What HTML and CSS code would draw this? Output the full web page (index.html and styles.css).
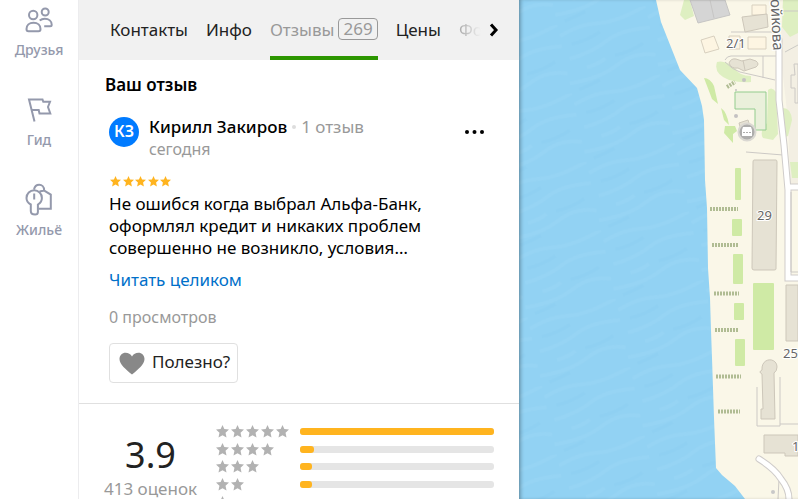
FILE: index.html
```html
<!DOCTYPE html>
<html lang="ru">
<head>
  <meta charset="UTF-8">
  <meta name="viewport" content="width=device-width, initial-scale=1.0">
  <title>Отзывы</title>
  <link rel="stylesheet" href="styles.css">
</head>
<body>
  <svg class="sprite" aria-hidden="true">
    <symbol id="star" viewBox="0 0 12 12">
      <path d="M6 0l1.700 3.800 4.300.4-3.200 2.900.9 4.400L6 9.400l-3.700 2.100.9-4.400L0 4.200l4.300-.4z"/>
    </symbol>
  </svg>

  <nav class="sidebar">
    <a class="side-link" href="#">
      <svg class="side-icon" viewBox="1 -3 32 36">
        <circle cx="11.200" cy="12" r="4.200"/>
        <circle cx="23.200" cy="9" r="3.500"/>
        <path d="M11.500 19.700c4.300 0 7 2.800 7 6.200c0 1.600-.9 2.300-2 2.300H6.500c-1.200 0-2-.8-2-2.300c0-3.400 2.700-6.200 7-6.200z"/>
        <path d="M17.700 17.600c1.300-1.100 3-1.800 5-1.800 4.300 0 7 2.400 7 6 0 1-.6 1.500-1.500 1.500h-6"/>
      </svg>
      <span>Друзья</span>
    </a>
    <a class="side-link" href="#">
      <svg class="side-icon" viewBox="1 -2 32 36">
        <path d="M12.500 29.500L7 7.500h13.500l.8 2.300h6.700l-2 5.200 2.300 6.500H17.500l-.8-3.500H9.800"/>
      </svg>
      <span>Гид</span>
    </a>
    <a class="side-link" href="#">
      <svg class="side-icon" viewBox="1 -2 32 36">
        <path d="M8.800 22.500c-2.700-1.300-4.300-3.600-4.300-6.500a7.700 7.700 0 0 1 15.400 0c0 2.900-1.500 5-4 6.500V30c0 1.600-1.200 2.500-2.800 2.500-2.700 0-4.300-1.500-4.300-3.500z"/>
        <path d="M12.200 11.500v6M12 7.500c.6-2.700 2.700-4.700 5.200-4.700 2.700 0 4.900 2 4.900 5.300M17.500 9.500l4.700-.9 6.600 4v14.200H16.500"/>
      </svg>
      <span>Жильё</span>
    </a>
  </nav>

  <main class="panel">
    <nav class="tabs">
      <a class="tab" href="#">Контакты</a>
      <a class="tab" href="#">Инфо</a>
      <a class="tab active" href="#">Отзывы <span class="tab-count">269</span></a>
      <a class="tab" href="#">Цены</a>
      <a class="tab faded" href="#">Фо</a>
      <button class="tabs-next" type="button" aria-label="Вперёд">
        <svg viewBox="0 0 10 14"><path d="M2 1.500L7 7l-5 5.500"/></svg>
      </button>
    </nav>

    <section class="my-review">
      <h2>Ваш отзыв</h2>
      <article class="review">
        <header class="author">
          <div class="avatar">КЗ</div>
          <div class="author-info">
            <div class="author-line"><b>Кирилл Закиров</b><i class="dot"></i><span>1 отзыв</span></div>
            <div class="date">сегодня</div>
          </div>
          <button class="more" type="button" aria-label="Ещё">
            <svg viewBox="0 0 20 4"><circle cx="2" cy="2" r="2"/><circle cx="9.500" cy="2" r="2"/><circle cx="17" cy="2" r="2"/></svg>
          </button>
        </header>
        <div class="stars small">
          <svg><use href="#star"/></svg><svg><use href="#star"/></svg><svg><use href="#star"/></svg><svg><use href="#star"/></svg><svg><use href="#star"/></svg>
        </div>
        <p class="review-text">Не ошибся когда выбрал Альфа-Банк, оформлял кредит и никаких проблем совершенно не возникло, условия…</p>
        <a class="read-more" href="#">Читать целиком</a>
        <div class="views">0 просмотров</div>
        <button class="useful" type="button">
          <svg viewBox="0 0 26 23"><path d="M13 22.500C7 17.300.5 12.500.5 6.900.5 3.300 3.200.7 6.600.7c2.600 0 5 1.300 6.400 3.700C14.400 2 16.800.7 19.400.7c3.400 0 6.100 2.600 6.100 6.200 0 5.600-6.500 10.400-12.500 15.600z"/></svg>
          <span>Полезно?</span>
        </button>
      </article>
    </section>

    <section class="rating">
      <div class="score">
        <div class="score-value">3.9</div>
        <div class="score-count">413 оценок</div>
      </div>
      <div class="chart">
        <div class="chart-row">
          <div class="stars"><svg><use href="#star"/></svg><svg><use href="#star"/></svg><svg><use href="#star"/></svg><svg><use href="#star"/></svg><svg><use href="#star"/></svg></div>
          <div class="bar"><div class="bar-fill" style="width: 100%"></div></div>
        </div>
        <div class="chart-row">
          <div class="stars"><svg><use href="#star"/></svg><svg><use href="#star"/></svg><svg><use href="#star"/></svg><svg><use href="#star"/></svg></div>
          <div class="bar"><div class="bar-fill" style="width: 7%"></div></div>
        </div>
        <div class="chart-row">
          <div class="stars"><svg><use href="#star"/></svg><svg><use href="#star"/></svg><svg><use href="#star"/></svg></div>
          <div class="bar"><div class="bar-fill" style="width: 6%"></div></div>
        </div>
        <div class="chart-row">
          <div class="stars"><svg><use href="#star"/></svg><svg><use href="#star"/></svg></div>
          <div class="bar"><div class="bar-fill" style="width: 6%"></div></div>
        </div>
        <div class="chart-row">
          <div class="stars"><svg><use href="#star"/></svg></div>
          <div class="bar"><div class="bar-fill" style="width: 46%"></div></div>
        </div>
      </div>
    </section>
  </main>

  <div class="map">
    <svg viewBox="519 0 279 499" preserveAspectRatio="xMinYMin slice">
      <defs>
        <pattern id="waves" width="90" height="70" patternUnits="userSpaceOnUse" patternTransform="rotate(-12)">
          <rect width="90" height="70" fill="#92d2f3"/>
          <path d="M0 12q20-8 40-5t50-7M5 36q25-2 40-10t45-4M0 60q30 2 50-8t40-2M20 48q12-1 20-5" fill="none" stroke="#96d4f4" stroke-width="4"/>
          <path d="M10 22q15 0 30-6M50 42q15 0 30-6M8 68q12-2 22-5" fill="none" stroke="#8fd0f2" stroke-width="3"/>
        </pattern>
      </defs>
      <rect x="519" width="279" height="499" fill="url(#waves)"/>
      <path class="land" d="M656 0l5 22 19 48 17 18 5 18 2 14 1 60 2 28 1 60 2 30 1 32 1 28 2 60 2 50 6 7 13 11 10 13h53V0z"/>
      <path d="M783 0h15v190h-8l-2-70-8-70z" fill="#f3efe3"/>

      <!-- зелень -->
      <g class="green">
        <path class="pale" d="M684 0l-4 15 5 5 9-4-4-16zM717 62q-4 12 12 18 12 3 22 2v-6q-12 0-16-8-10-8-18-6zM783 0h15v33l-8 4-8-10zM768 90q4-4 8 2l2 42-5 6-10-2q-4-6 4-15zM783 108q8 0 9 12l-4 16-5 2z"/>
        <path d="M704 78q6 0 10 8l4 18-6-5zM721 108q6 4 8 17l-5-5zM725 126l10 0 2 5-4 3v9l-9-10z"/>
        <rect x="735" y="168" width="6" height="32" rx="1"/>
        <rect x="732" y="219" width="10" height="17" rx="1"/>
        <rect x="733" y="254" width="10" height="30" rx="1"/>
        <rect x="734" y="303" width="10" height="17" rx="1"/>
        <rect x="735" y="339" width="10" height="27" rx="1"/>
        <rect x="753" y="283" width="21" height="67" rx="1"/>
        <path class="pale" d="M790 162h8v16h-6z"/>
      </g>
      <path class="field" d="M735 92h31v38h-11v-21h-20z"/>

      <!-- ступени у воды -->
      <g class="steps">
        <path d="M710 209h28M712 245h26M714 293.500h25M715 330h24M716 376.500h25M718 411.500h22M727 87l8-5"/>
      </g>

      <!-- тропинки и заборы -->
      <g class="fence">
        <path d="M731 32h46M725 60q2-4 6-4l46 0M725 62q8 8 15 10l35 8M763 56v22M746 152l37 3M757 387v39h23v-49M780 424h18M785 52l13-7M783 11h15M778 499l1-20"/>
      </g>

      <!-- дороги -->
      <path class="road-edge" d="M779 40v60l5 45 4 45v88h10M788 187h10M759 459q16 10 22 20 8 10 8 20"/>
      <path class="road" d="M779 40v60l5 45 4 45v88h10M788 187h10M759 459q16 10 22 20 8 10 8 20"/>
      <path class="fence" d="M791 192v80h7M794 64h4v39h-3V88h-4V75h4z"/>

      <!-- здания -->
      <path class="gray-house" d="M690 0h35l5 15-32 8zM710 0l4 18"/>
      <g class="house">
        <path class="cream" d="M701 40l13-4 5 13-14 4zM748 37h18v12h-18zM752 5h14v10h-14zM729 36h11v13h-11z"/>
        <path d="M742 17l25-3 1 13-23 5z"/>
        <path d="M729 63q2-5 7-4l6 2 8-2 6 2q4 3 0 6l-12 4-6-3q-7 1-9-5zM743 60l2 10"/>
        <path d="M754 160h22q1 0 1 2l-1 107q0 1-2 1h-20q-2 0-2-2l1-106q0-2 1-2z"/>
        <path d="M762 374q-4-2 0-4c-1-13 15-13 15-3q0 4-3 6l1 46h-14v-10h2z"/>
        <path d="M786 285h12v56h-12zM764 435h34v21h-13v-3h-21zM739 123l9-3 2 6-9 4z"/>
      </g>

      <circle cx="747" cy="132" r="8.500" fill="#aeadac" stroke="#dad8d2" stroke-width="2"/>
      <path d="M743 127h8l1 3v6h-10v-6z" fill="#fff"/>
      <path d="M743 132.500h8" stroke="#aeadac" stroke-dasharray="2 1"/>
      <circle cx="744" cy="80" r="2" fill="#c4c2c2"/>
      <circle cx="736" cy="90" r="1" fill="#c4c2c2"/>
      <circle cx="736" cy="116" r="2" fill="#c4c2c2"/>
      <circle cx="773" cy="492" r="2" fill="#c8c8c8"/>

      <g class="map-label">
        <text x="726" y="48">2/1</text>
        <text x="757" y="220">29</text>
        <text x="783" y="358">25</text>
        <text x="792" y="451">1</text>
        <text class="street" transform="translate(770 -10) rotate(87)">Бойкова</text>
      </g>
    </svg>
  </div>
</body>
</html>
```
FILE: styles.css
```css
* {
  box-sizing: border-box;
}

body {
  margin: 0;
  height: 100vh;
  display: flex;
  overflow: hidden;
  font-family: "Noto Sans", "Open Sans", sans-serif;
  font-size: 17px;
  color: #000;
  background: #fff;
}

a {
  text-decoration: none;
  color: inherit;
}

button {
  font: inherit;
  color: inherit;
  background: none;
  border: 0;
  padding: 0;
  cursor: pointer;
}

.sprite {
  position: absolute;
  width: 0;
  height: 0;
}

/* sidebar */
.sidebar {
  flex: 0 0 79px;
  border-right: 1px solid #ececee;
  display: flex;
  flex-direction: column;
  gap: 32px;
}

.side-link {
  display: flex;
  flex-direction: column;
  align-items: center;
  gap: 6px;
  font-size: 14px;
  line-height: 16px;
  color: #9499ac;
}

.side-link span {
  font-weight: 500;
}

.side-icon {
  width: 32px;
  height: 36px;
  overflow: visible;
  fill: none;
  stroke: #9499ac;
  stroke-width: 2;
}

/* panel */
.panel {
  flex: 0 0 440px;
  display: flex;
  flex-direction: column;
  overflow: hidden;
}

.tabs {
  flex: none;
  display: flex;
  gap: 18px;
  height: 60px;
  padding: 0 20px 0 31px;
  background: #f1f1f1;
  color: #222;
}

.tab {
  flex: none;
  display: flex;
  align-items: center;
  gap: 4px;
  border-bottom: 4px solid transparent;
  padding-top: 2px;
}

.tab.active {
  color: #999;
  border-color: #2c9600;
}

.tab-count {
  border: 1px solid #999;
  border-radius: 4px;
  padding: 0 4px;
  line-height: 20px;
}

.tab.faded {
  width: 24px;
  margin-right: -14px;
  color: transparent;
  background: linear-gradient(to right, #aaa, #f1f1f1 22px);
  background-clip: text;
}

.tabs-next {
  display: flex;
  align-items: center;
  margin-left: auto;
}

.tabs-next svg {
  width: 10px;
  height: 14px;
  fill: none;
  stroke: #000;
  stroke-width: 3;
}

.my-review {
  flex: none;
  padding: 14px 26px 20px;
  border-bottom: 1px solid #e0e0e0;
}

h2 {
  margin: 0;
  font-size: 17px;
  line-height: 22px;
  font-weight: 600;
}

.review {
  padding: 20px 4px 0;
}

.author {
  display: flex;
  gap: 10px;
}

.avatar {
  width: 30px;
  height: 30px;
  margin-top: 1px;
  border-radius: 50%;
  background: #007bff;
  color: #fff;
  font-size: 16px;
  font-weight: 600;
  line-height: 28px;
  text-align: center;
}

.author-info {
  flex: 1;
  line-height: 22px;
  color: #999;
}

.author-line {
  display: flex;
  align-items: center;
}

.author-line b {
  font-weight: 500;
  color: #000;
}

.dot {
  width: 4px;
  height: 4px;
  margin: 0 5px;
  border-radius: 50%;
  background: #ddd;
}

.date {
  font-size: 16px;
}

.more {
  align-self: flex-start;
  height: 32px;
  margin-right: 4px;
}

.more svg {
  display: block;
  width: 20px;
  height: 4px;
}

.stars {
  display: flex;
  gap: 2px;
  width: 73px;
  fill: #b2b2b2;
}

.stars svg {
  width: 13px;
  height: 13px;
}

.stars.small {
  justify-content: space-between;
  gap: 0;
  width: 61px;
  margin: 16px 0 0 1px;
  fill: #ffb41f;
}

.stars.small svg {
  width: 11px;
  height: 11px;
}

.review-text {
  margin: 6px 0 10px;
  max-width: 320px;
  line-height: 22px;
}

.read-more {
  display: block;
  line-height: 22px;
  color: #0070c9;
}

.views {
  margin: 15px 0;
  font-size: 16px;
  line-height: 22px;
  color: #999;
}

.useful {
  display: flex;
  align-items: center;
  gap: 7px;
  height: 40px;
  padding: 0 7px 0 9px;
  border: 1px solid #e0e0e0;
  border-radius: 4px;
  color: #222;
}

.useful span {
  padding-bottom: 4px;
}

.useful svg {
  width: 26px;
  height: 23px;
  fill: #888;
}

/* rating */
.rating {
  flex: none;
  display: flex;
  padding: 19px 25px 20px 22px;
}

.score {
  width: 99px;
  margin-right: 16px;
  padding-top: 10px;
  text-align: center;
}

.score-value {
  font-size: 36px;
  line-height: 44px;
  color: #222;
}

.score-count {
  line-height: 24px;
  color: #999;
}

.chart {
  flex: 1;
  height: 88px;
  display: flex;
  flex-direction: column;
}

.chart-row {
  flex: 1;
  display: flex;
  align-items: center;
  gap: 11px;
}

.bar {
  flex: 1;
  height: 7px;
  border-radius: 3px;
  background: #e5e5e5;
}

.bar-fill {
  height: 100%;
  border-radius: 3px;
  background: #ffb41f;
}

/* map */
.map {
  flex: 1;
  min-width: 0;
  position: relative;
  overflow: hidden;
  box-shadow: inset 3px 0 4px -2px rgba(0, 0, 0, 0.4);
}

.map svg {
  display: block;
  width: 100%;
  height: 100%;
  position: relative;
  z-index: -1;
}

.land {
  fill: #faf7e8;
}

.green path,
.green rect {
  fill: #cfeaa5;
}

.green .pale {
  fill: #deefc1;
}

.field {
  fill: #eaf0db;
  stroke: #93cc8e;
}

.steps path {
  stroke: #b0bc93;
  stroke-width: 4;
  stroke-dasharray: 2 1;
}

.fence,
.fence path {
  fill: none;
  stroke: #ccc9c5;
}

.road-edge,
.road {
  fill: none;
  stroke: #cfccca;
  stroke-width: 7;
  stroke-linecap: round;
}

.road {
  stroke: #fff;
  stroke-width: 5;
}

.gray-house {
  fill: #d5d5d5;
  stroke: #c6c5c4;
}

.house path {
  fill: #e6e2d4;
  stroke: #cdc7ba;
}

.house .cream {
  fill: #fdf5e2;
  stroke: #d8d0bf;
}

.map-label text {
  font-size: 13px;
  fill: #666;
  stroke: #fff;
  stroke-width: 2;
  paint-order: stroke;
}

.map-label .street {
  font-size: 15px;
}
```
